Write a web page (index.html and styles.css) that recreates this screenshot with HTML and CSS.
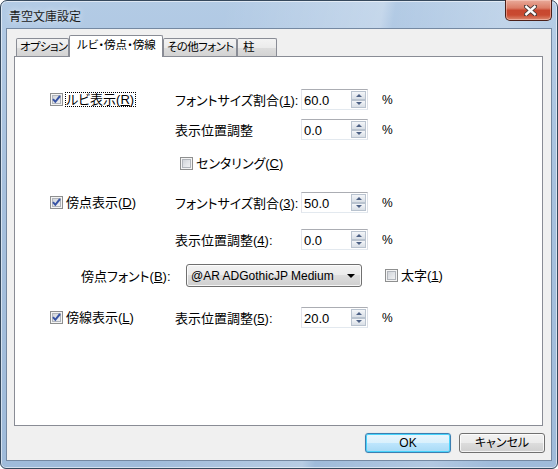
FILE: index.html
```html
<!DOCTYPE html>
<html lang="ja">
<head>
<meta charset="utf-8">
<title>青空文庫設定</title>
<link rel="stylesheet" href="styles.css">
</head>
<body>
<div class="window">
  <div class="titlebar">
    <span class="title">青空文庫設定</span>
    <div class="close">
      <svg width="13" height="11" viewBox="0 0 13 11">
        <path d="M2 1.5 L11 9.5 M11 1.5 L2 9.5" stroke="#4a3b38" stroke-width="4.2" stroke-linecap="square" fill="none"/>
        <path d="M2.3 1.8 L10.7 9.2 M10.7 1.8 L2.3 9.2" stroke="#ffffff" stroke-width="2.4" stroke-linecap="square" fill="none"/>
      </svg>
    </div>
  </div>
  <div class="client">
    <div class="tabs">
      <div class="tab t1">オプション</div>
      <div class="tab active t2">ルビ・傍点・傍線</div>
      <div class="tab t3">その他フォント</div>
      <div class="tab t4">柱</div>
    </div>
    <div class="panel">
      <div class="row r1">
        <div class="col-a check">
          <span class="cb on"><svg width="11" height="11" viewBox="0 0 11 11"><path d="M2 5.2 L4.3 7.8 L9 2" stroke="#3753a4" stroke-width="2" fill="none"/></svg></span>
          <span class="lbl focus">ルビ表示(<u>R</u>)</span>
        </div>
        <div class="col-b">フォントサイズ割合(<u>1</u>):</div>
        <div class="spin"><span class="val">60.0</span><span class="arrows"><span class="up"></span><span class="down"></span></span></div>
        <div class="pct">%</div>
      </div>
      <div class="row r2">
        <div class="col-a"></div>
        <div class="col-b">表示位置調整</div>
        <div class="spin"><span class="val">0.0</span><span class="arrows"><span class="up"></span><span class="down"></span></span></div>
        <div class="pct">%</div>
      </div>
      <div class="row r3">
        <div class="indent-c"></div>
        <div class="check">
          <span class="cb"></span>
          <span class="lbl">センタリング(<u>C</u>)</span>
        </div>
      </div>
      <div class="row r4">
        <div class="col-a check">
          <span class="cb on"><svg width="11" height="11" viewBox="0 0 11 11"><path d="M2 5.2 L4.3 7.8 L9 2" stroke="#3753a4" stroke-width="2" fill="none"/></svg></span>
          <span class="lbl">傍点表示(<u>D</u>)</span>
        </div>
        <div class="col-b">フォントサイズ割合(<u>3</u>):</div>
        <div class="spin"><span class="val">50.0</span><span class="arrows"><span class="up"></span><span class="down"></span></span></div>
        <div class="pct">%</div>
      </div>
      <div class="row r5">
        <div class="col-a"></div>
        <div class="col-b">表示位置調整(<u>4</u>):</div>
        <div class="spin"><span class="val">0.0</span><span class="arrows"><span class="up"></span><span class="down"></span></span></div>
        <div class="pct">%</div>
      </div>
      <div class="row r6">
        <div class="indent-f"></div>
        <div class="col-f">傍点フォント(<u>B</u>):</div>
        <div class="combo"><span class="combo-text">@AR ADGothicJP Medium</span><span class="combo-arrow"></span></div>
        <div class="check bold">
          <span class="cb"></span>
          <span class="lbl">太字(<u>1</u>)</span>
        </div>
      </div>
      <div class="row r7">
        <div class="col-a check">
          <span class="cb on"><svg width="11" height="11" viewBox="0 0 11 11"><path d="M2 5.2 L4.3 7.8 L9 2" stroke="#3753a4" stroke-width="2" fill="none"/></svg></span>
          <span class="lbl">傍線表示(<u>L</u>)</span>
        </div>
        <div class="col-b">表示位置調整(<u>5</u>):</div>
        <div class="spin"><span class="val">20.0</span><span class="arrows"><span class="up"></span><span class="down"></span></span></div>
        <div class="pct">%</div>
      </div>
    </div>
    <div class="buttons">
      <button class="btn default">OK</button>
      <button class="btn">キャンセル</button>
    </div>
  </div>
</div>
</body>
</html>
```
FILE: styles.css
```css
html, body {
  margin: 0;
  padding: 0;
  background: #ffffff;
}
body {
  font-family: "Liberation Sans", "Noto Sans CJK JP", sans-serif;
  font-size: 13px;
  font-feature-settings: "palt";
  color: #000;
}
u { text-decoration: underline; text-underline-offset: 1px; }

.window {
  width: 558px;
  height: 469px;
  box-sizing: border-box;
  border: 1px solid #36495d;
  border-radius: 7px 7px 6px 6px;
  background:
    linear-gradient(100deg, rgba(255,255,255,0) 35%, rgba(255,255,255,0.25) 60%, rgba(255,255,255,0) 62%, rgba(255,255,255,0.2) 80%, rgba(255,255,255,0) 90%),
    linear-gradient(180deg, #b3cbe5 0%, #a7c1de 40%, #9fbbda 100%);
  box-shadow: inset 0 0 0 1px rgba(255,255,255,0.55);
  display: flex;
  flex-direction: column;
}

.titlebar {
  height: 27px;
  display: flex;
  align-items: center;
  padding-left: 8px;
}
.title {
  font-family: "Noto Sans CJK JP", sans-serif;
  font-size: 12px;
  color: #1b1b1b;
  line-height: 1;
  margin-top: 2px;
  text-shadow: 0 0 6px rgba(255,255,255,0.8);
}
.close {
  margin-left: auto;
  align-self: flex-start;
  margin-top: -1px;
  margin-right: 5px;
  width: 47px;
  height: 21px;
  box-sizing: border-box;
  border: 1px solid #4b2019;
  border-top: none;
  border-radius: 0 0 5px 5px;
  background: linear-gradient(180deg, #e9ab9b 0%, #db7d67 40%, #c8472f 52%, #c94a31 75%, #dd8a70 100%);
  box-shadow: inset 0 0 0 1px rgba(255,220,210,0.45);
  display: flex;
  align-items: center;
  justify-content: center;
}
.close svg { display: block; margin-left: 3px; }

.client {
  flex: 1;
  margin: 0 5px 7px 5px;
  border: 1px solid #7589a2;
  background: #f0f0f0;
  padding: 6px 8px 7px 7px;
  display: flex;
  flex-direction: column;
}

.tabs {
  display: flex;
  align-items: flex-end;
  height: 21px;
  padding-left: 2px;
  position: relative;
  z-index: 1;
}
.tab {
  height: 18px;
  box-sizing: border-box;
  border: 1px solid #898c95;
  border-bottom: none;
  border-radius: 2px 2px 0 0;
  background: linear-gradient(180deg, #f3f3f3 0%, #ebebeb 50%, #dddddd 50%, #d3d3d3 100%);
  display: flex;
  align-items: center;
  padding-left: 3px;
  white-space: nowrap;
  overflow: hidden;
  font-size: 11.5px;
  letter-spacing: -0.6px;
  line-height: 1;
}
.tab.active {
  height: 22px;
  margin-bottom: -1px;
  background: #ffffff;
  padding-left: 7px;
  padding-bottom: 2px;
  letter-spacing: 0;
}
.t1 { width: 53px; }
.t2 { width: 94px; }
.t3 { width: 74px; }
.t4 { width: 40px; padding-left: 5px; }

.panel {
  flex: 1;
  border: 1px solid #898c95;
  background: #ffffff;
  padding-left: 35px;
  display: flex;
  flex-direction: column;
}

.row {
  display: flex;
  align-items: center;
  height: 21px;
}
.r1 { margin-top: 32px; }
.r2 { margin-top: 9px; }
.r3 { margin-top: 13px; }
.r4 { margin-top: 18px; }
.r5 { margin-top: 16px; }
.r6 { margin-top: 14px; height: 23px; }
.r7 { margin-top: 20px; }

.col-a { width: 125px; flex: none; }
.col-b { width: 126px; flex: none; white-space: nowrap; }
.indent-c { width: 130px; flex: none; }
.indent-f { width: 31px; flex: none; }
.col-f { width: 105px; flex: none; white-space: nowrap; }
.pct { margin-left: 14px; font-size: 12px; }

.check {
  display: flex;
  align-items: center;
  gap: 2px;
  white-space: nowrap;
}
.bold { margin-left: 23px; }
.lbl { padding: 0 1px; line-height: 15px; }
.lbl.focus { outline: 1px dotted #000; outline-offset: -1px; padding: 0 2px 0 1px; }

.cb {
  width: 13px;
  height: 13px;
  box-sizing: border-box;
  border: 1px solid #8e8f8f;
  background: linear-gradient(135deg, #c8ccd2 0%, #e4e6e9 55%, #f8f8f8 100%);
  box-shadow: inset 0 0 0 1px #f4f4f4, inset 0 0 0 2px #b1b5bb;
  flex: none;
  display: flex;
  align-items: center;
  justify-content: center;
}
.cb svg { display: block; }

.spin {
  width: 67px;
  height: 21px;
  box-sizing: border-box;
  border: 1px solid;
  border-color: #abadb3 #dbdfe6 #e3e9ef #e2e3ea;
  background: #ffffff;
  display: flex;
  flex: none;
}
.val {
  flex: 1;
  display: flex;
  align-items: center;
  padding-left: 2px;
  padding-top: 2px;
}
.arrows {
  width: 15px;
  margin: 1px 1px 1px 0;
  display: flex;
  flex-direction: column;
}
.arrows span {
  flex: 1;
  box-sizing: border-box;
  border: 1px solid #b9c3cf;
  background: linear-gradient(180deg, #f4f6f9 0%, #e6eaef 50%, #d9dfe6 100%);
  display: flex;
  align-items: center;
  justify-content: center;
}
.arrows .up::before {
  content: "";
  width: 0;
  height: 0;
  border-left: 3px solid transparent;
  border-right: 3px solid transparent;
  border-bottom: 3px solid #4d6185;
}
.arrows .down::before {
  content: "";
  width: 0;
  height: 0;
  border-left: 3px solid transparent;
  border-right: 3px solid transparent;
  border-top: 3px solid #4d6185;
}

.combo {
  width: 176px;
  height: 23px;
  box-sizing: border-box;
  border: 1px solid #707070;
  border-radius: 3px;
  background: linear-gradient(180deg, #f2f2f2 0%, #ebebeb 50%, #dddddd 50%, #cfcfcf 100%);
  box-shadow: inset 0 0 0 1px rgba(255,255,255,0.8);
  display: flex;
  align-items: center;
  padding-left: 4px;
  padding-right: 6px;
  flex: none;
  font-size: 12px;
}
.combo-text { flex: 1; white-space: nowrap; padding-top: 1px; }
.combo-arrow {
  width: 0;
  height: 0;
  border-left: 4px solid transparent;
  border-right: 4px solid transparent;
  border-top: 4px solid #000;
}

.buttons {
  display: flex;
  justify-content: flex-end;
  gap: 8px;
  margin-top: 7px;
  margin-right: -2px;
}
.btn {
  width: 86px;
  height: 20px;
  box-sizing: border-box;
  border: 1px solid #707070;
  border-radius: 3px;
  background: linear-gradient(180deg, #f2f2f2 0%, #ebebeb 50%, #dddddd 50%, #cfcfcf 100%);
  box-shadow: inset 0 0 0 1px rgba(255,255,255,0.75);
  font-family: "Liberation Sans", "Noto Sans CJK JP", sans-serif;
  font-size: 12px;
  font-feature-settings: "palt";
  color: #000;
  padding: 0;
  line-height: 1;
}
.btn.default {
  border-color: #3c7fb1;
  background: linear-gradient(180deg, #eaf6fd 0%, #d9f0fc 50%, #bee6fd 50%, #a7d9f5 100%);
  box-shadow: inset 0 0 0 1px #48d3fb, 0 0 1px rgba(60,127,177,0.4);
}
```
